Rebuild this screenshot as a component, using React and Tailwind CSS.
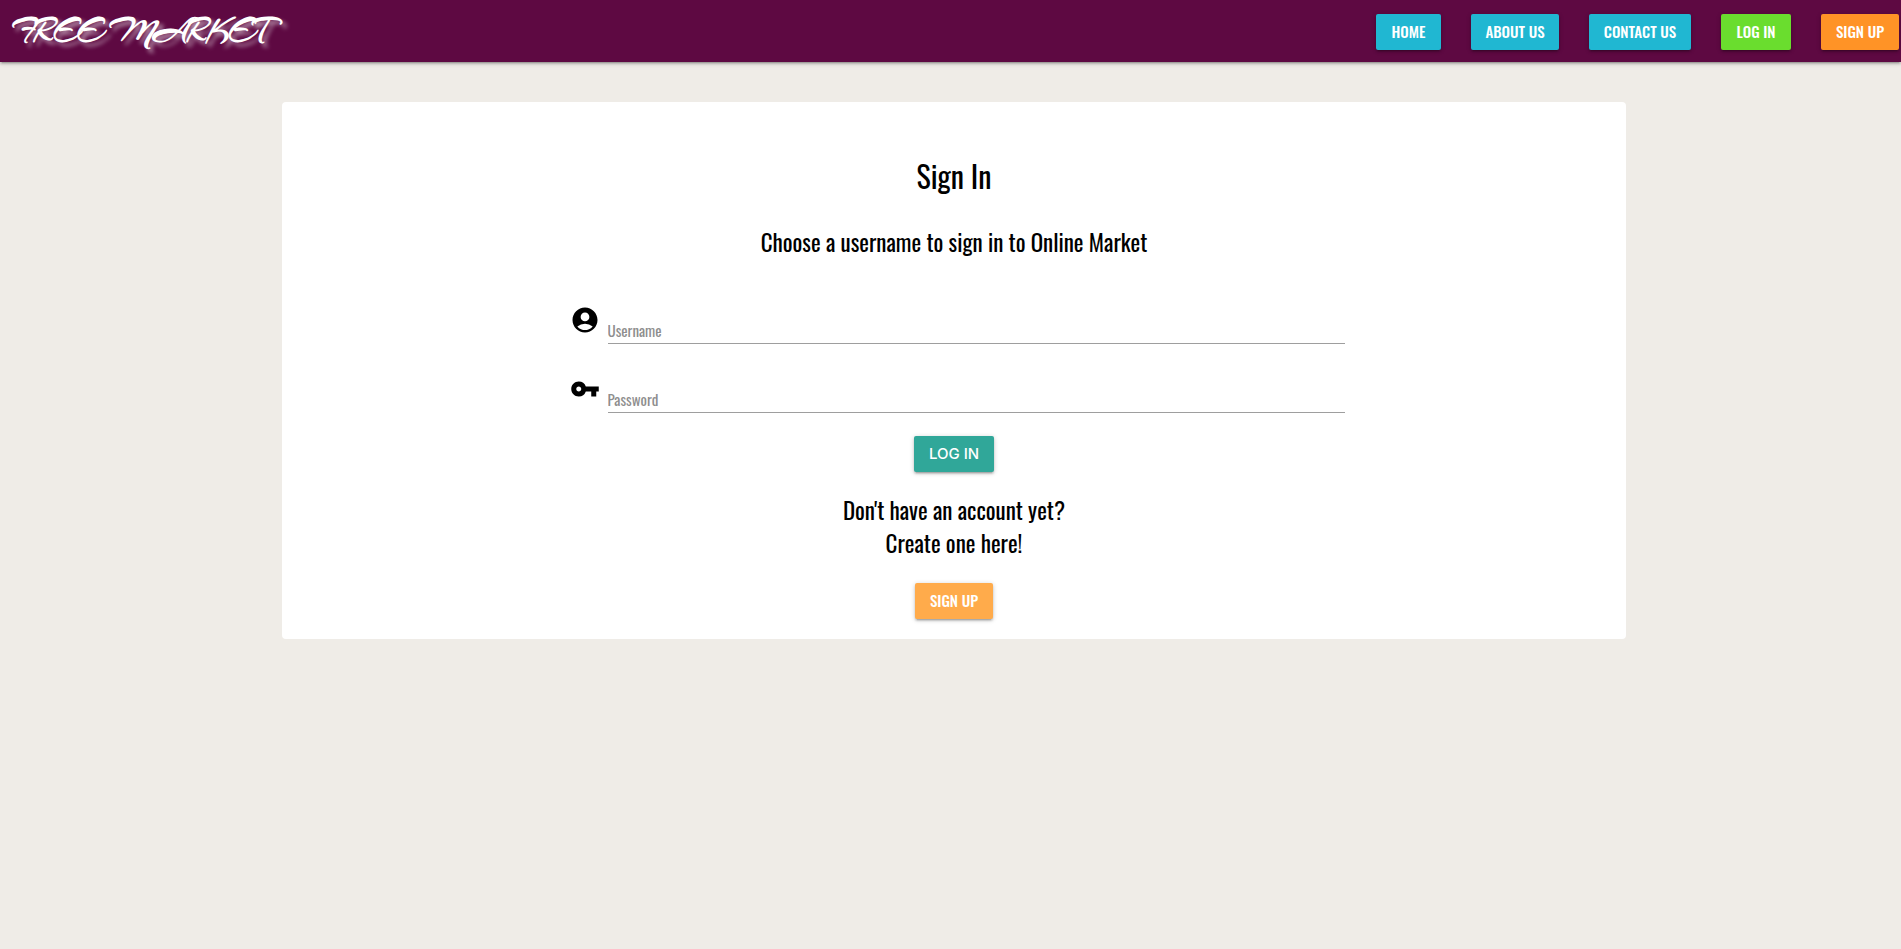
import { MdAccountCircle, MdVpnKey } from "react-icons/md";

const NARROW = "font-['Oswald','Liberation_Sans_Narrow','Roboto_Condensed',sans-serif]";
const RAISED = "shadow-[0_2px_2px_0_rgba(0,0,0,0.14),0_3px_1px_-2px_rgba(0,0,0,0.12),0_1px_5px_0_rgba(0,0,0,0.2)]";

const links = [
  { label: "HOME", look: "w-[65px] bg-[#20b7d2]" },
  { label: "ABOUT US", look: "w-[88px] bg-[#20b7d2]" },
  { label: "CONTACT US", look: "w-[102px] bg-[#20b7d2]" },
  { label: "LOG IN", look: "w-[70px] bg-[#6add2e]" },
  { label: "SIGN UP", look: "w-[78px] bg-[#ff9326]" },
];

function Field({ id, label, type, Icon }) {
  return (
    <div className="flex h-[39px] items-start">
      <label htmlFor={id} aria-label={label} className="shrink-0">
        <Icon className="size-[30px] text-black" aria-hidden="true" />
      </label>
      <input
        id={id}
        type={type}
        placeholder={label}
        className="ml-2 mt-3 h-[27px] min-w-0 flex-1 border-b border-[#9e9e9e] bg-transparent pb-px text-[15px] text-black outline-none placeholder:text-[#8e8e8e]"
      />
    </div>
  );
}

export default function App() {
  return (
    <div className={`min-h-screen bg-[#efece7] text-black ${NARROW}`}>
      <header className={`flex h-[62px] items-center justify-between bg-[#5e0942] pl-3 pr-[2px] ${RAISED}`}>
        <a
          href="#home"
          className="whitespace-nowrap font-['Arizonia','Liberation_Serif',cursive] text-[33px] font-bold leading-none text-white [text-shadow:4px_4px_4px_rgba(255,255,255,0.5)]"
        >
          FREE MARKET
        </a>
        <nav className="flex gap-[30px] pt-[2px]">
          {links.map(({ label, look }) => (
            <a
              key={label}
              href="#"
              className={`flex h-9 items-center justify-center whitespace-nowrap rounded-[2px] pb-px text-[15px] font-medium text-white ${look} ${RAISED}`}
            >
              {label}
            </a>
          ))}
        </nav>
      </header>

      <main className="pl-[7px] pt-10">
        <section className="mx-auto w-[1344px] max-w-full rounded-[4px] bg-white pb-5 pt-[52px] text-center">
          <h1 className="text-3xl leading-[44px]">Sign In</h1>
          <h2 className="mt-7 text-[23px] leading-[33px]">Choose a username to sign in to Online Market</h2>
          <form className="mt-[46px]" onSubmit={(e) => e.preventDefault()}>
            <div className="mx-auto flex w-[781px] max-w-full flex-col gap-[30px] pl-[6px]">
              <Field id="username" label="Username" type="text" Icon={MdAccountCircle} />
              <Field id="password" label="Password" type="password" Icon={MdVpnKey} />
            </div>
            <button
              type="submit"
              className={`mt-[23px] h-9 w-20 rounded-[2px] bg-[#30a799] font-['Inter',sans-serif] text-[15px] font-medium text-white ${RAISED}`}
            >
              LOG IN
            </button>
          </form>
          <p className="mt-[22px] text-[23px] leading-[33px]">
            Don't have an account yet?
            <br />
            Create one here!
          </p>
          <button
            type="button"
            className={`mt-[23px] h-9 w-[78px] rounded-[2px] bg-[#ffab4b] pb-px text-[15px] font-medium text-white ${RAISED}`}
          >
            SIGN UP
          </button>
        </section>
      </main>
    </div>
  );
}
